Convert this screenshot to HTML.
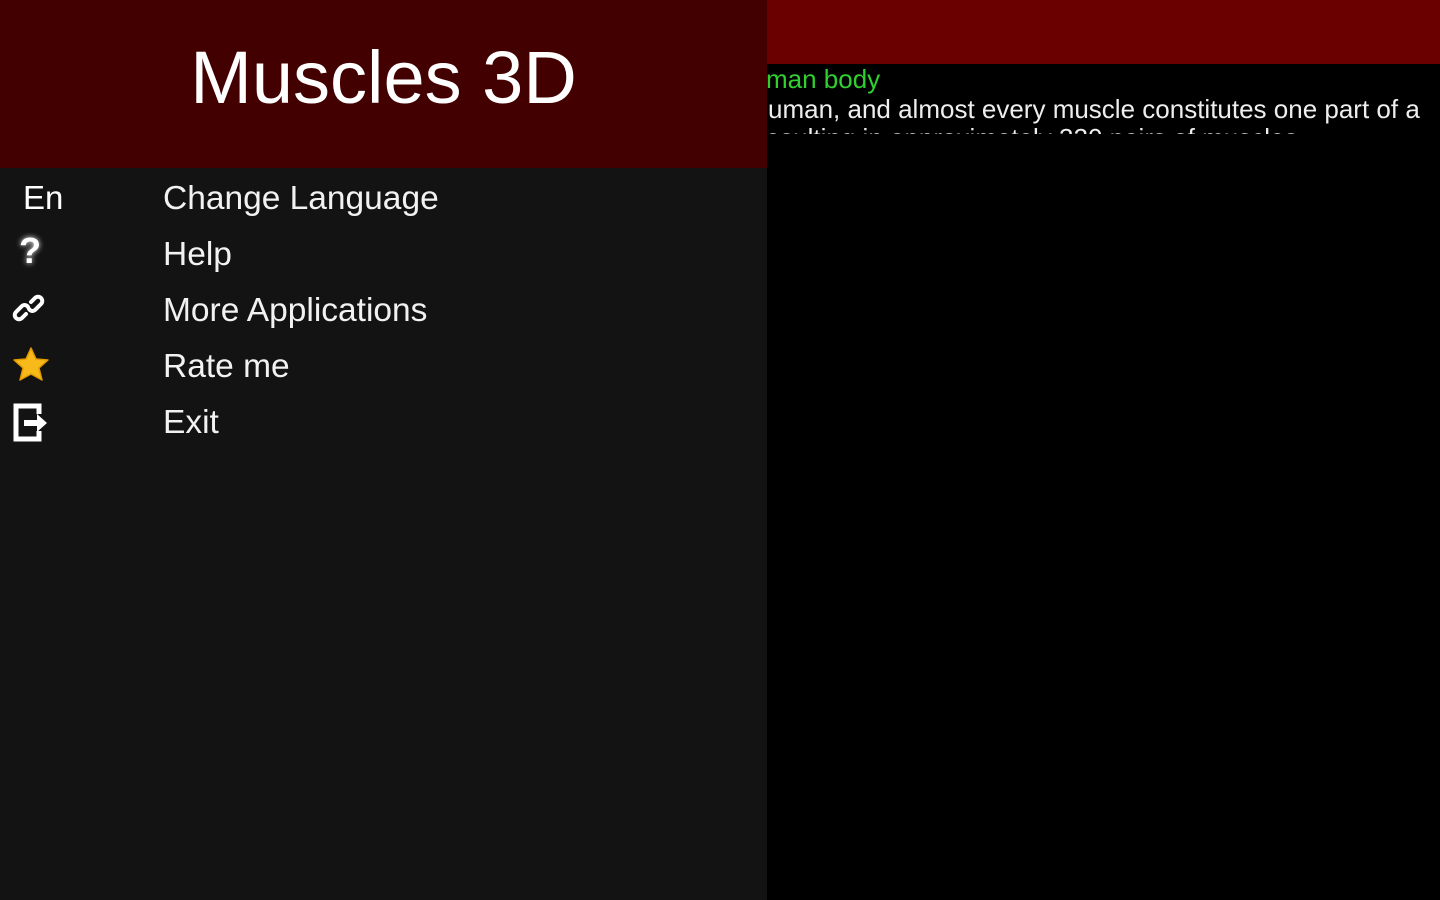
<!DOCTYPE html><html><head><style>
body{margin:0;width:1440px;height:900px;background:#000;overflow:hidden;position:relative;font-family:"Liberation Sans",sans-serif}
.bar{position:absolute;left:0;top:0;width:1440px;height:64px;background:#6b0000}
.txt{position:absolute;left:767px;top:64px;width:673px;height:70px;overflow:hidden;white-space:nowrap}
.drawer{position:absolute;left:0;top:0;width:767px;height:900px;background:#131313}
.hd{height:168px;background:#430000;color:#fff;font-size:74px;text-align:center;line-height:156px}
.it{position:absolute;left:163px;color:#f2f2f2;font-size:33.5px}
.ic{position:absolute;left:12px}
</style></head><body>
<div class="bar"></div>
<div class="txt">
<div style="position:absolute;left:-1px;top:0px;color:#2fd02f;font-size:26px">man body</div>
<div style="position:absolute;left:1px;top:30px;color:#eee;font-size:26px">uman, and almost every muscle constitutes one part of a</div>
<div style="position:absolute;left:-10px;top:59px;color:#eee;font-size:26px">resulting in approximately 320 pairs of muscles</div>
</div>
<div class="drawer">
<div class="hd">Muscles 3D</div>
<div style="position:absolute;left:23px;top:179px;color:#fff;font-size:33px">En</div>
<div class="it" style="top:180px">Change Language</div>
<div class="it" style="top:236px">Help</div>
<div class="it" style="top:292px">More Applications</div>
<div class="it" style="top:348px">Rate me</div>
<div class="it" style="top:404px">Exit</div>
<div class="ic" style="left:19px;top:230px;color:#fff;font-size:36px;font-weight:bold;text-shadow:0 0 6px #fff">?</div>
<svg class="ic" style="top:292px" width="34" height="32" viewBox="0 0 34 32"><g fill="none" stroke="#fff" stroke-width="4" stroke-linecap="round"><path d="M14 22l-4 4a4 4 0 0 1-6-6l6-6a4 4 0 0 1 6 1"/><path d="M19 10l4-4a4 4 0 0 1 6 6l-6 6a4 4 0 0 1-6-1"/></g></svg>
<svg class="ic" style="top:346px" width="38" height="36" viewBox="0 0 38 36"><path d="M19 2l5 11 12 1-9 8 3 12-11-6-11 6 3-12-9-8 12-1z" fill="#f8b91a" stroke="#e09a00" stroke-width="1.5" stroke-linejoin="round"/></svg>
<svg class="ic" style="top:402px" width="38" height="40" viewBox="0 0 38 40"><path d="M27 12V4H4v33h23v-8" fill="none" stroke="#fff" stroke-width="5"/><path d="M12 18h13v-6l10 9-10 9v-6H12z" fill="#fff"/></svg>
</div>
</body></html>
